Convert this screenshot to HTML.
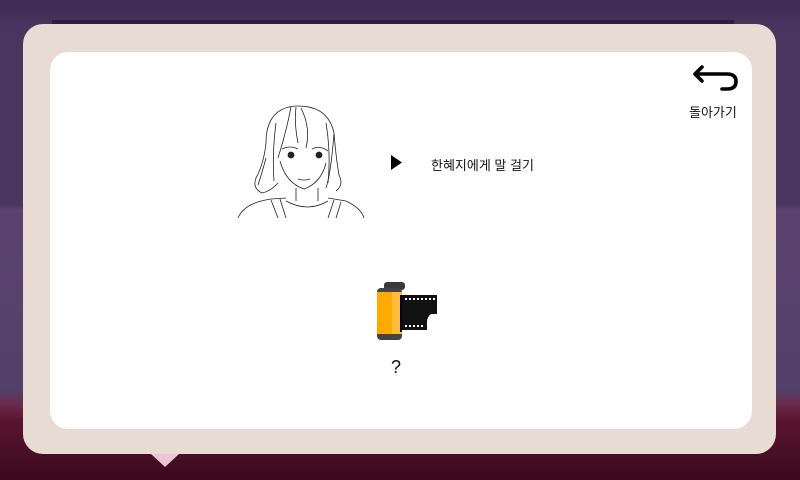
<!DOCTYPE html>
<html><head><meta charset="utf-8"><style>
body{margin:0;width:800px;height:480px;overflow:hidden;position:relative;font-family:"Liberation Sans","Noto Sans CJK KR",sans-serif;
background:linear-gradient(#3f2a52 0,#4a3560 30px,#4a3560 205px,#5a4270 210px,#54406a 390px,#6a2a4a 405px,#5a1530 420px,#3a0a1c 480px);}
.outer{position:absolute;left:23px;top:24px;width:753px;height:430px;background:#e7dbd3;border-radius:20px}
.inner{position:absolute;left:50px;top:52px;width:702px;height:377px;background:#fff;border-radius:18px}
.t{position:absolute;font-size:13px;color:#111}
</style></head><body>
<div style="position:absolute;left:52px;top:20px;width:682px;height:8px;background:#2e1e3d"></div>
<div class="outer"></div>
<div style="position:absolute;left:151px;top:454px;width:0;height:0;border-left:14px solid transparent;border-right:14px solid transparent;border-top:13px solid #e9c6d6"></div>
<div class="inner"></div>
<svg style="position:absolute;left:691px;top:64px" width="50" height="30" viewBox="0 0 50 30"><path d="M11 3 L4 10 L11 17 M4 10 H36 Q45 10 45 17.5 Q45 25 36 25 H31" fill="none" stroke="#000" stroke-width="3.6" stroke-linecap="round" stroke-linejoin="round"/></svg>
<div class="t" style="left:689px;top:102px">돌아가기</div>
<svg style="position:absolute;left:236px;top:103px" width="130" height="116" viewBox="0 0 130 116" fill="none" stroke="#222" stroke-width="0.8">
<path d="M30 40 Q30 5 60 3 Q92 2 98 30 Q100 55 103 72 Q108 82 100 88 M30 40 Q28 60 20 75 Q16 85 26 90 Q35 88 42 80 M98 30 Q95 70 90 85"/>
<path d="M55 4 Q50 30 42 55 M60 4 Q58 20 62 40 M65 5 Q75 25 70 45 M40 20 Q36 50 38 78 M90 20 Q95 50 92 80 M30 55 Q26 70 22 82"/>
<path d="M46 46 Q54 42 62 46 M76 46 Q84 42 92 48"/>
<circle cx="55" cy="52" r="3" fill="#222"/><circle cx="83" cy="52" r="3" fill="#222"/>
<path d="M44 58 Q50 80 68 86 Q85 80 90 60 M62 76 Q68 78 74 76"/>
<path d="M60 85 V98 M82 85 V98 M50 98 Q72 110 92 98 M2 115 Q8 100 35 96 L50 95 M92 95 L110 98 Q125 105 128 115 M35 97 L42 115 M44 96 L50 115 M98 97 L92 115 M105 99 L100 115"/>
</svg>
<svg style="position:absolute;left:391px;top:155px" width="12" height="15"><path d="M0 0 L11 7.5 L0 15Z" fill="#000"/></svg>
<div class="t" style="left:431px;top:155px">한혜지에게 말 걸기</div>
<svg style="position:absolute;left:375px;top:282px" width="64" height="60" viewBox="0 0 64 60">
<rect x="9" y="0" width="21" height="8" rx="3" fill="#3a3a3a"/>
<rect x="2" y="6" width="25" height="52" rx="4" fill="#444"/>
<rect x="2" y="10" width="15" height="42" fill="#ffaa00"/>
<rect x="17" y="10" width="10" height="42" fill="#ffbd3a"/>
<path d="M26 13 H62 V32 H56 Q52 35 52 40 V48 H26Z" fill="#111"/>
<rect x="25" y="13" width="2" height="37" fill="#000"/>
<g fill="#fff"><rect x="30" y="16" width="2" height="2"/><rect x="34" y="16" width="2" height="2"/><rect x="38" y="16" width="2" height="2"/><rect x="42" y="16" width="2" height="2"/><rect x="46" y="16" width="2" height="2"/><rect x="50" y="16" width="2" height="2"/><rect x="54" y="16" width="2" height="2"/><rect x="58" y="16" width="2" height="2"/>
<rect x="30" y="43" width="2" height="2"/><rect x="34" y="43" width="2" height="2"/><rect x="38" y="43" width="2" height="2"/><rect x="42" y="43" width="2" height="2"/><rect x="46" y="43" width="2" height="2"/></g>
</svg>
<div class="t" style="left:391px;top:357px;font-size:18px;font-family:'Liberation Sans Narrow','Liberation Sans',sans-serif">?</div>
</body></html>
